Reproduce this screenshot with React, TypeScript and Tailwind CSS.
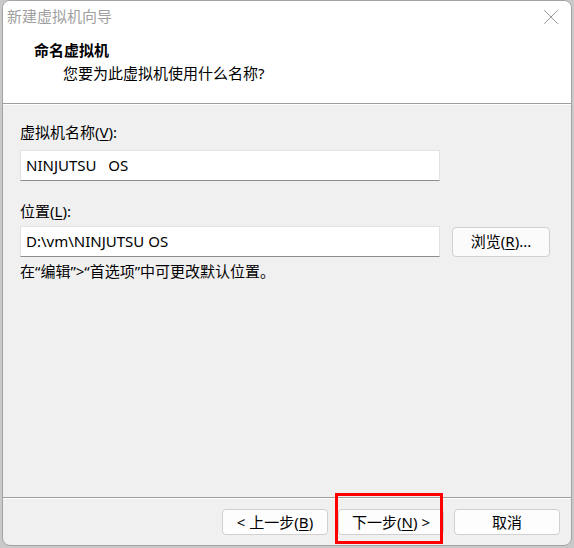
import { X } from 'lucide-react';

const font = { fontFamily: '"Noto Sans", "Noto Sans CJK SC", sans-serif' };

function Mnemonic({ k }: { k: string }) {
  return (
    <>
      (<span className="underline underline-offset-2">{k}</span>)
    </>
  );
}

function WizardButton({ children }: { children: React.ReactNode }) {
  return (
    <button className="w-[106px] h-[26px] rounded-[4px] border border-[#d0d0d0] bg-[#fdfdfd] text-[15px] leading-none text-black flex items-center justify-center">
      {children}
    </button>
  );
}

export default function App() {
  return (
    <div className="w-[574px] h-[548px] bg-[#c9c9c9] pl-[2px] pr-[2px]" style={font}>
      <div className="w-[570px] h-[546px] rounded-lg border border-[#a3a3a3] bg-[#f0f0f0] overflow-hidden flex flex-col">
        {/* header */}
        <div className="h-[102px] bg-white flex flex-col">
          <div className="h-[31px] flex items-center justify-between pl-[4px] pr-[7px]">
            <span className="text-[15px] text-[#a0a0a0]">新建虚拟机向导</span>
            <X className="w-[26px] h-[26px] text-[#8a8a8a]" strokeWidth={0.8} />
          </div>
          <div className="pl-[31px] pt-[8px] text-[15px] font-bold text-black leading-[20px]">命名虚拟机</div>
          <div className="pl-[60px] pt-[3px] text-[15px] text-black leading-[20px]">您要为此虚拟机使用什么名称?</div>
        </div>
        <div className="h-px bg-[#a0a0a0]" />
        <div className="h-px bg-white" />

        {/* body */}
        <div className="flex-1 flex flex-col px-[17px] pt-[17px]">
          <label className="text-[15px] leading-[20px] text-black">
            虚拟机名称<Mnemonic k="V" />:
          </label>
          <div className="mt-[8px] w-[420px] h-[31px] bg-white border border-[#e2e2e2] border-b-[#8c8c8c] flex items-center pl-[5px] text-[15px] text-black whitespace-pre">
            NINJUTSU   OS
          </div>

          <label className="mt-[20px] text-[15px] leading-[20px] text-black">
            位置<Mnemonic k="L" />:
          </label>
          <div className="mt-[5px] flex items-center gap-[12px]">
            <div className="w-[420px] h-[31px] bg-white border border-[#e2e2e2] border-b-[#8c8c8c] flex items-center pl-[5px] text-[15px] text-black whitespace-pre">
              D:\vm\NINJUTSU OS
            </div>
            <button className="w-[98px] h-[30px] rounded-[4px] border border-[#d0d0d0] bg-[#fbfbfb] text-[15px] text-black flex items-center justify-center">
              浏览<Mnemonic k="R" />...
            </button>
          </div>
          <p className="mt-[4px] text-[15px] leading-[20px] text-black">在“编辑”&gt;“首选项”中可更改默认位置。</p>
        </div>

        {/* footer */}
        <div className="h-px bg-[#a0a0a0]" />
        <div className="h-px bg-white" />
        <div className="h-[46px] flex items-start justify-end gap-[10px] pr-[11px] pt-[10px]">
          <WizardButton>
            &lt; 上一步<Mnemonic k="B" />
          </WizardButton>
          <div className="relative">
            <WizardButton>
              下一步<Mnemonic k="N" />&nbsp;&gt;
            </WizardButton>
            <div className="absolute left-[-3px] top-[-16px] w-[108px] h-[51px] border-[3px] border-[#ff0000]" />
          </div>
          <WizardButton>取消</WizardButton>
        </div>
      </div>
    </div>
  );
}
